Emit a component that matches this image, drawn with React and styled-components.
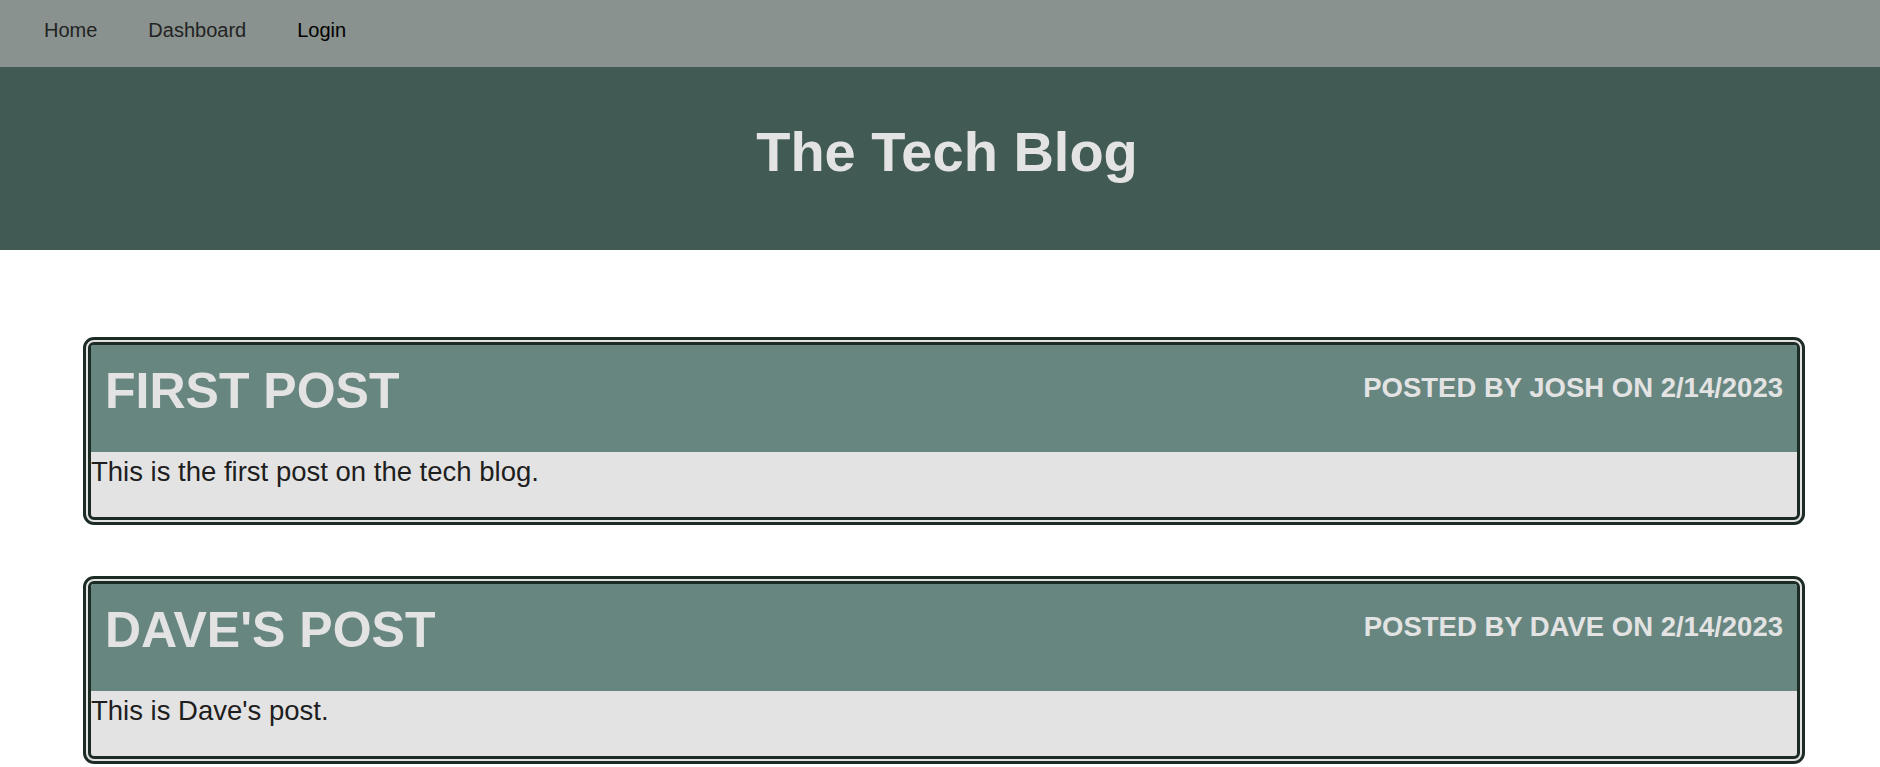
import React from "react";
import styled, { createGlobalStyle } from "styled-components";

const GlobalStyle = createGlobalStyle`
  html, body {
    margin: 0;
    padding: 0;
    background: #ffffff;
    font-family: "Liberation Sans", Arial, sans-serif;
  }
`;

const Nav = styled.nav`
  box-sizing: border-box;
  height: 67px;
  padding: 19px 44px 0;
  background-color: #89928e;
  display: flex;
  align-items: flex-start;
  gap: 51px;
`;

const NavLink = styled.a`
  font-size: 20px;
  line-height: 23px;
  text-decoration: none;
  color: ${props => (props.active ? "#000000" : "#232323")};
  cursor: pointer;
`;

const Header = styled.header`
  box-sizing: border-box;
  height: 183px;
  padding: 52px 0 0 14px;
  background-color: #425a54;
  text-align: center;
`;

const Title = styled.h1`
  margin: 0;
  font-size: 56px;
  font-weight: bold;
  color: #e3e3e3;
`;

const Main = styled.main`
  padding: 87px 75px 4px 83px;
  display: flex;
  flex-direction: column;
  gap: 51px;
`;

const Card = styled.article`
  border: 8px double #1c2b24;
  border-radius: 11px;
  background-color: #e3e3e3;
  overflow: hidden;
`;

const CardHeader = styled.div`
  display: flex;
  justify-content: space-between;
  align-items: flex-start;
  padding: 17px 14px 32px;
  background-color: #678680;
  color: #e3e3e3;
`;

const PostTitle = styled.h2`
  margin: 0;
  font-size: 50px;
  font-weight: bold;
  text-transform: uppercase;
`;

const PostMeta = styled.h3`
  margin: 10px 0 0;
  font-size: 27.5px;
  font-weight: bold;
  text-transform: uppercase;
`;

const CardBody = styled.p`
  margin: 0;
  padding: 4px 0 29px;
  font-size: 27.5px;
  color: #1e1e1e;
`;

const posts = [
  {
    id: 1,
    title: "First Post",
    author: "Josh",
    date: "2/14/2023",
    body: "This is the first post on the tech blog."
  },
  {
    id: 2,
    title: "Dave's Post",
    author: "Dave",
    date: "2/14/2023",
    body: "This is Dave's post."
  }
];

function PostCard({ post }) {
  return (
    <Card>
      <CardHeader>
        <PostTitle>{post.title}</PostTitle>
        <PostMeta>
          Posted by {post.author} on {post.date}
        </PostMeta>
      </CardHeader>
      <CardBody>{post.body}</CardBody>
    </Card>
  );
}

export default function App() {
  return (
    <>
      <GlobalStyle />
      <Nav>
        <NavLink href="#">Home</NavLink>
        <NavLink href="#">Dashboard</NavLink>
        <NavLink href="#" active>
          Login
        </NavLink>
      </Nav>
      <Header>
        <Title>The Tech Blog</Title>
      </Header>
      <Main>
        {posts.map(post => (
          <PostCard key={post.id} post={post} />
        ))}
      </Main>
    </>
  );
}
